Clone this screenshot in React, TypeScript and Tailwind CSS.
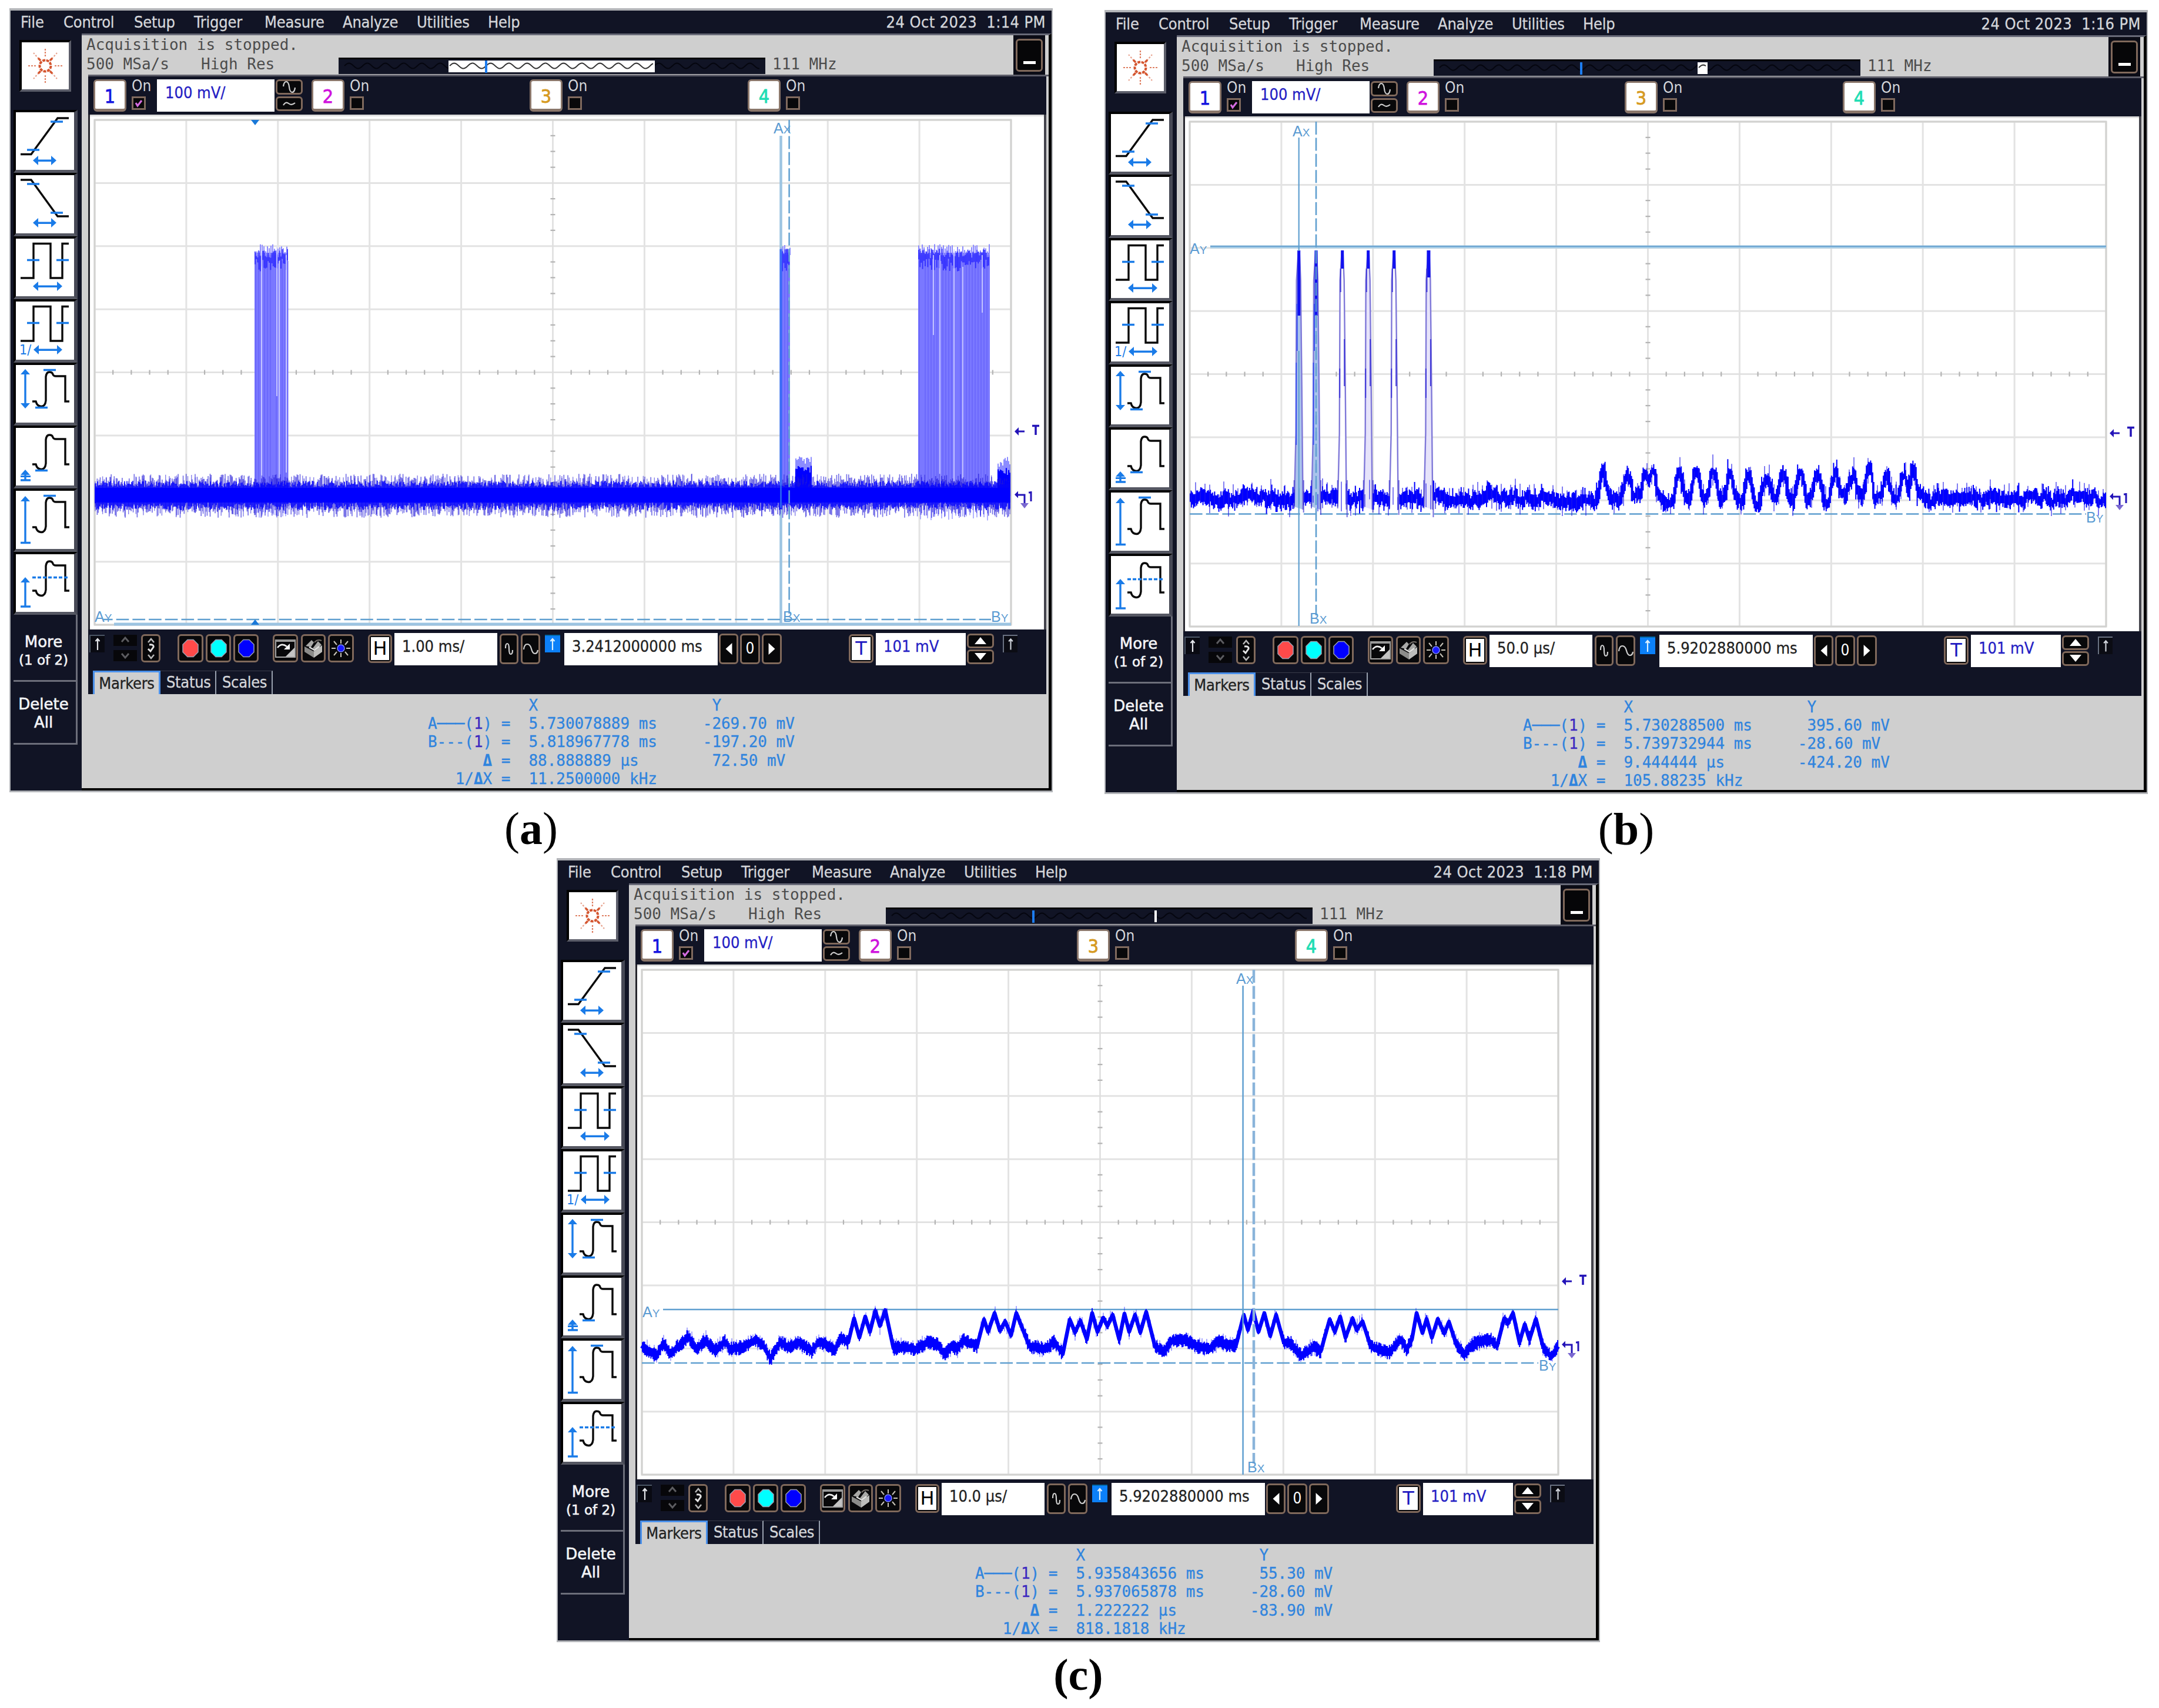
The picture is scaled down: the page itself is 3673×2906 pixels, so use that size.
import type { ReactNode } from "react";

type Kind = "a" | "b" | "c";

interface Capture {
  id: Kind;
  time: string;
  scale: string;
  delay: string;
  windowX: number;
  windowW: number;
  x: string[];
  y: string[];
}

const captures: Record<Kind, Capture> = {
  a: {
    id: "a",
    time: "1:14 PM",
    scale: "1.00 ms/",
    delay: "3.2412000000 ms",
    windowX: 187,
    windowW: 351,
    x: ["5.730078889 ms", "5.818967778 ms", "88.888889 µs", "11.2500000 kHz"],
    y: ["-269.70 mV", "-197.20 mV", " 72.50 mV"],
  },
  b: {
    id: "b",
    time: "1:16 PM",
    scale: "50.0 µs/",
    delay: "5.9202880000 ms",
    windowX: 449,
    windowW: 17,
    x: ["5.730288500 ms", "5.739732944 ms", "9.444444 µs", "105.88235 kHz"],
    y: [" 395.60 mV", "-28.60 mV", "-424.20 mV"],
  },
  c: {
    id: "c",
    time: "1:18 PM",
    scale: "10.0 µs/",
    delay: "5.9202880000 ms",
    windowX: 457,
    windowW: 4,
    x: ["5.935843656 ms", "5.937065878 ms", "1.222222 µs", "818.1818 kHz"],
    y: [" 55.30 mV", "-28.60 mV", "-83.90 mV"],
  },
};

const menus = [
  ["File", "w-[73px]"],
  ["Control", "w-[120px]"],
  ["Setup", "w-[102px]"],
  ["Trigger", "w-[120px]"],
  ["Measure", "w-[133px]"],
  ["Analyze", "w-[126px]"],
  ["Utilities", "w-[121px]"],
  ["Help", "w-[80px]"],
];

const ui = "font-['DejaVu_Sans_Condensed','DejaVu_Sans',sans-serif] [font-stretch:condensed]";
const mono = "font-['DejaVu_Sans_Mono',monospace]";

// small seeded generator so the noise is the same on every render
function makeRandom(seed: number) {
  let s = seed;
  return () => {
    s = (s * 1664525 + 1013904223) % 4294967296;
    return s / 4294967296;
  };
}

// row of vertical strokes, one per sample column
function comb(x0: number, x1: number, step: number, span: (x: number) => [number, number] | null) {
  let d = "";
  for (let x = x0; x <= x1; x += step) {
    const s = span(x);
    if (s) d += `M${x.toFixed(1)} ${s[0].toFixed(1)}V${s[1].toFixed(1)}`;
  }
  return d;
}

/* ---------- plot ---------- */

const L = 145;
const R = 1704;
const T = 190;
const B = 1049;

function Grid() {
  const dx = (R - L) / 10;
  const dy = (B - T) / 8;
  let lines = "";
  for (let i = 0; i <= 10; i++) if (i !== 5) lines += `M${L + dx * i} ${T}V${B}`;
  for (let i = 0; i <= 8; i++) if (i !== 4) lines += `M${L} ${T + dy * i}H${R}`;
  const cx = (L + R) / 2;
  const cy = (T + B) / 2;
  let ticks = "";
  for (let i = 1; i < 50; i++) if (i % 5) ticks += `M${L + (dx * i) / 5} ${cy - 4}v8`;
  for (let i = 1; i < 32; i++) if (i % 4) ticks += `M${cx - 4} ${T + (dy * i) / 4}h8`;
  return (
    <g fill="none">
      <path d={lines} stroke="#e3e3e3" strokeWidth="3" />
      <path d={`M${cx} ${T}V${B}M${L} ${cy}H${R}`} stroke="#dedede" strokeWidth="2.5" />
      <path d={ticks} stroke="#b4b4b4" strokeWidth="2.2" />
      <path d={`M${L} ${B}V${T}H${R}V${B}Z`} stroke="#d2d2d0" strokeWidth="3" />
    </g>
  );
}

function Tag({ x, y, a, b }: { x: number; y: number; a: string; b: string }) {
  return (
    <text x={x} y={y} fontSize="25" fill="#5b9bd2" fontFamily="Liberation Sans, sans-serif">
      {a}
      <tspan fontSize="19">{b}</tspan>
    </text>
  );
}

const cursor = "#5f9fd0";

function BandTrace() {
  const r = makeRandom(11);
  const peak = () => Math.pow(r(), 1.6);
  const fuzz = comb(146, 1703, 1.7, () => [812 - peak() * 20, 846 + peak() * 21]);
  const rare = comb(146, 1703, 6.3, () => [810 - r() * 17, 848 + r() * 17]);
  const mid = comb(146, 1703, 2, () => [815 - r() * 11, 841 + r() * 13]);
  const bursts: [number, number][] = [
    [417, 474],
    [1312, 1328],
    [1546, 1668],
  ];
  return (
    <g fill="none" stroke="#0000ff">
      {bursts.map(([x0, x1]) => (
        <g key={x0}>
          <rect x={x0} y={416} width={x1 - x0} height={403} fill="#7a78ff" stroke="none" />
          <path d={comb(x0 + 1, x1, 3, () => [401 + r() * 14, 420])} stroke="#8c8aff" strokeWidth="2" />
          <path d={comb(x0 + 2, x1, 5, () => (r() > 0.3 ? [430, 815] : null))} stroke="#5a55f8" strokeWidth="1.2" opacity="0.7" />
          <path d={comb(x0 + 1, x1, 2.2, () => [409 + r() * 16, 426 + r() * 22])} stroke="#2824ff" strokeWidth="1.9" opacity="0.85" />
        </g>
      ))}
      <path d="M429 412V800M455 404V660M459 430V800M471 420V790" stroke="#dcdcff" strokeWidth="1.6" />
      <path d="M1572 420V556M1583 420V812M1607 410V812M1622 440V812M1655 420V518" stroke="#d6d6ff" strokeWidth="1.6" />
      <path d={comb(1338, 1365, 2, () => [762 + r() * 18, 830])} strokeWidth="2" opacity="0.45" />
      <path d={comb(1338, 1365, 2, () => [778 + r() * 12, 830])} strokeWidth="2.2" />
      <path d={comb(1682, 1703, 2, () => [762 + r() * 18, 830])} strokeWidth="2" opacity="0.45" />
      <path d={comb(1682, 1703, 2, () => [782 + r() * 12, 830])} strokeWidth="2.2" />
      <path d={fuzz} stroke="#2018d8" strokeWidth="1.7" opacity="0.6" />
      <path d={rare} stroke="#2018d8" strokeWidth="1.4" opacity="0.55" />
      <path d={mid} strokeWidth="1.9" opacity="0.8" />
      <path d="M145 828.5H1703" strokeWidth="25" />
      <path d={comb(420, 472, 5, () => [846, 858 + r() * 10])} strokeWidth="1.2" opacity="0.5" />
      <path d={comb(1550, 1668, 6, () => [846, 860 + r() * 12])} strokeWidth="1.2" opacity="0.5" />
    </g>
  );
}

const spikes = [330.7, 360, 404.7, 448.7, 492.7, 551.4];
const bumps = [848, 890, 921, 932, 978, 1007, 1036, 1065, 1096, 1126, 1155, 1184, 1213, 1242, 1272, 1301, 1331, 1361, 1376];

function SpikeTrace() {
  const r = makeRandom(5);
  const wobble: number[] = [];
  let w = 0;
  for (let i = 0; i < 900; i++) {
    w = w * 0.66 + (r() - 0.5) * 13;
    wobble.push(w);
  }
  const level = (x: number) => {
    let lift = 0;
    for (const c of bumps) {
      const k = Math.exp(-Math.pow(Math.abs(x - c) / 7.5, 3));
      lift = Math.max(lift, k * 42);
    }
    return 832 - lift + wobble[Math.max(0, Math.round((x - 144) / 2))];
  };
  const base = comb(146, 1703, 1.8, (x) => {
    if (spikes.some((c) => Math.abs(x - c) < 8)) return null;
    const a = level(x - 1.5);
    const b = level(x + 1.5);
    const up = r() > 0.85 ? r() * 15 : 0;
    const down = r() > 0.9 ? r() * 12 : 0;
    return [Math.min(a, b) - 4 - r() * 10 - up, Math.max(a, b) + 4 + r() * 9 + down];
  });
  return (
    <g fill="none" stroke="#0000ff">
      {spikes.map((c, i) => (
        <g key={c}>
          <path
            d={`M${c - 8} ${845}L${c - 5} 720L${c - 4} 460L${c - 1} 412H${c + 1}L${c + 3} 460L${c + 5} 640L${c + 7} 850`}
            stroke="#7f78d8"
            strokeWidth="2.4"
            fill={i < 2 ? "#a9c3ec" : i === 5 || i === 3 ? "#e6e3fa" : "#fff"}
          />
          <path d={`M${c} 409V${i < 2 ? 520 : i === 5 ? 455 : 440}`} stroke="#1010f0" strokeWidth={i === 5 ? 6 : 5} />
          {i > 1 && <path d={`M${c - 3} 440V480M${c + 3.5} 560V640M${c - 4.5} 610V660`} stroke="#4038d8" strokeWidth="2" />}
          {i < 2 && <path d={`M${c - 3} 500V580M${c - 4.5} 600V740`} stroke="#3a50f0" strokeWidth="2" />}
          <path d={`M${c - 8} 800V848M${c + 8} 800V${855 + (i % 3) * 4}`} stroke="#3a32d0" strokeWidth="2" opacity="0.7" />
        </g>
      ))}
      <path d={base} strokeWidth="2" />
      <path d={comb(147, 1703, 8, (x) => [level(x) - 26 * r() - 4, level(x) + 22 * r() + 4])} stroke="#2018e8" strokeWidth="1.6" opacity="0.7" />
    </g>
  );
}

const packets: [number, number][] = [
  [144, 830], [170, 847], [181, 825], [194, 843], [224, 814], [239, 835], [253, 820], [270, 838], [286, 822],
  [295, 835], [312, 833], [340, 820], [351, 829], [364, 852], [381, 823], [394, 833], [410, 823], [434, 839],
  [444, 825], [458, 826], [473, 838], [483, 816], [496, 824], [506, 783], [515, 816], [525, 780], [533, 806],
  [542, 770], [550, 796], [559, 769], [573, 834], [596, 833], [611, 836], [628, 825], [648, 826], [659, 844],
  [672, 831], [681, 836], [692, 819], [715, 831], [727, 785], [734, 806], [745, 774], [754, 804], [763, 788],
  [773, 812], [782, 774], [804, 830], [831, 836], [847, 823], [861, 844], [873, 785], [882, 807], [891, 787],
  [902, 819], [911, 774], [920, 806], [930, 782], [937, 796], [946, 777], [957, 819], [966, 775], [974, 806],
  [984, 777], [993, 807], [1003, 772], [1018, 831], [1033, 841], [1047, 821], [1070, 819], [1088, 830],
  [1111, 835], [1128, 821], [1141, 829], [1156, 828], [1169, 777], [1176, 803], [1185, 770], [1194, 806],
  [1204, 774], [1214, 813], [1224, 777], [1237, 824], [1250, 826], [1267, 847], [1288, 833], [1300, 839],
  [1315, 785], [1324, 806], [1333, 780], [1342, 816], [1354, 783], [1361, 803], [1371, 788], [1385, 831],
  [1417, 841], [1436, 819], [1446, 836], [1455, 819], [1463, 774], [1473, 808], [1480, 784], [1489, 816],
  [1499, 784], [1510, 809], [1518, 789], [1531, 829], [1544, 844], [1561, 826], [1587, 819], [1600, 830],
  [1612, 783], [1618, 792], [1627, 774], [1638, 824], [1647, 793], [1655, 819], [1666, 784], [1678, 831],
  [1692, 849], [1704, 831],
];

function PacketTrace() {
  const r = makeRandom(23);
  const at = (x: number) => {
    const i = Math.max(1, packets.findIndex((p) => p[0] >= x));
    const [x0, y0] = packets[i - 1];
    const [x1, y1] = packets[i];
    return y0 + ((y1 - y0) * (x - x0)) / (x1 - x0);
  };
  return (
    <g fill="none" stroke="#0000ff">
      <path d={`M${packets.map((p) => p.join(" ")).join("L")}`} strokeWidth="6.5" strokeLinejoin="round" />
      <path
        d={comb(146, 1703, 1.8, (x) => {
          const quiet = at(x) > 812 ? 1 : 0.65;
          return [at(x) - (6 + r() * 7) * quiet, at(x) + (6 + r() * 7) * quiet];
        })}
        strokeWidth="2"
      />
      <path d={comb(146, 1703, 4, (x) => [at(x) - r() * 18, at(x) + r() * 16])} strokeWidth="1.3" opacity="0.5" />
    </g>
  );
}

const vDash = "22 5.4";
const hDash = "21.6 6.100";

function Plot({ kind }: { kind: Kind }) {
  return (
    <svg className="block h-[876px] w-[1623px]" viewBox="137 181 1623 876">
      <rect x="137" y="181" width="1623" height="3" fill="#dedede" />
      <Grid />
      {kind === "a" && (
        <>
          <path d="M1312.5 217V1048" stroke="#9cc4e2" strokeWidth="4.5" />
          <BandTrace />
          <path d="M1312.5 410V812" stroke="#3a6cf8" strokeWidth="4" />
          <path d="M1312.5 812V850" stroke="#2a6cf0" strokeWidth="2.5" />
          <path d="M1326.6 410V812" stroke="#fff" strokeWidth="2.5" strokeDasharray="5.4 22" />
          <path d="M1326.6 190V1030" stroke={cursor} strokeWidth="2.5" strokeDasharray={vDash} />
          <path d="M160 1040H1670" stroke={cursor} strokeWidth="2.5" strokeDasharray={hDash} strokeDashoffset="6" />
          <path d="M178 1048H1704" stroke="#9cc4e2" strokeWidth="5" />
          <path d="M411 190h14l-7 9zM411 1049h14l-7 -9z" fill="#1978d8" />
          <Tag x={1300} y={213} a="A" b="X" />
          <Tag x={1316} y={1044} a="B" b="X" />
          <Tag x={145} y={1044} a="A" b="Y" />
          <Tag x={1670} y={1044} a="B" b="Y" />
        </>
      )}
      {kind === "b" && (
        <>
          <path d="M145 857.5H1670" stroke={cursor} strokeWidth="2.5" strokeDasharray={hDash} />
          <SpikeTrace />
          <path d="M180 403H1704" stroke="#a3cbe6" strokeWidth="5" />
          <path d="M180 402H1704" stroke="#6ba3d0" strokeWidth="2" />
          <path d="M330.7 217V410M330.7 580V1048" stroke={cursor} strokeWidth="2.2" />
          <path d="M360 520V810" stroke="#fff" strokeWidth="2.5" strokeDasharray="5.4 22" />
          <path d="M360 190V1030" stroke={cursor} strokeWidth="2.6" strokeDasharray={vDash} />
          <Tag x={320} y={215} a="A" b="X" />
          <Tag x={349} y={1044} a="B" b="X" />
          <Tag x={145} y={415} a="A" b="Y" />
          <Tag x={1670} y={872} a="B" b="Y" />
        </>
      )}
      {kind === "c" && (
        <>
          <path d="M181 768H1704" stroke={cursor} strokeWidth="2.5" />
          <path d="M145 859H1670" stroke={cursor} strokeWidth="2.5" strokeDasharray={hDash} />
          <PacketTrace />
          <path d="M1167.6 217V1049" stroke={cursor} strokeWidth="2.5" />
          <path d="M1186 190V1030" stroke="#8ab4da" strokeWidth="4.5" strokeDasharray={vDash} />
          <Tag x={1156} y={214} a="A" b="X" />
          <Tag x={1175} y={1045} a="B" b="X" />
          <Tag x={146} y={781} a="A" b="Y" />
          <Tag x={1671} y={872} a="B" b="Y" />
        </>
      )}
      <g stroke="#2414b8" strokeWidth="3" fill="none">
        <path d="M1712 720h15" />
        <path d="M1740 710.500h12M1746 710v16" strokeWidth="3.500" />
        <path d="M1712 828h8M1719 828h8v16M1738 822v17M1734 824h4" />
        <path d="M1710 720l7 -7v14zM1710 827.500l6 -6v12z" fill="#2414b8" stroke="none" />
      </g>
      <path d="M1720 842h14l-7 9z" fill="#7a68d0" />
    </svg>
  );
}

/* ---------- sidebar ---------- */

const BLUE = "#1a7be8";

function HArrow({ x0, x1, y }: { x0: number; x1: number; y: number }) {
  return (
    <g fill={BLUE} stroke="none">
      <rect x={x0 + 5} y={y - 1.5} width={x1 - x0 - 10} height="3.5" />
      <path d={`M${x0 - 1} ${y}l9 -8v16zM${x1 + 1} ${y}l-9 -8v16z`} />
    </g>
  );
}

const overshoot = "M28 62h6q2 8 9 8.500q7 0 8 -10V20q1 -8 6 -8q5 0 6 4q1 3 5 3h16v43h7";
const pulse = "M8 67H30V8.500H59V67H79V8.500H90";

const measureIcons: ReactNode[] = [
  <>
    <path d="M8 71.500H26L71 10H90" />
    <path d="M19 64h21M59 16h21" stroke={BLUE} />
    <HArrow x0={30} x1={68} y={82} />
  </>,
  <>
    <path d="M8 8H26L71 70H90" />
    <path d="M19 15h21M59 64h21" stroke={BLUE} />
    <HArrow x0={30} x1={68} y={81} />
  </>,
  <>
    <path d={pulse} />
    <path d="M19 36.500h21M69 36.500h21" stroke={BLUE} />
    <HArrow x0={30} x1={78} y={81} />
  </>,
  <>
    <path d={pulse} />
    <path d="M19 36.500h21M69 36.500h21" stroke={BLUE} />
    <text x="6" y="90" fontSize="23" fill={BLUE} stroke="none" fontFamily="DejaVu Sans Condensed, DejaVu Sans, sans-serif">
      1/
    </text>
    <HArrow x0={31} x1={78} y={82} />
  </>,
  <>
    <path d={overshoot} />
    <path d="M47 8.500h21M33 72.500h21M16 14V68" stroke={BLUE} />
    <path d="M16 7l8 9h-16zM16 74l8 -9h-16z" fill={BLUE} stroke="none" />
  </>,
  <>
    <path d={overshoot} />
    <path d="M33 72.500h21M8 89h17M16 76v13" stroke={BLUE} />
    <path d="M16 71l8 9h-16zM8 81h17v3h-17z" fill={BLUE} stroke="none" />
  </>,
  <>
    <path d={overshoot} />
    <path d="M47 8.500h21M8 88.500h17M16 16V88" stroke={BLUE} />
    <path d="M16 9l8 9h-16z" fill={BLUE} stroke="none" />
  </>,
  <>
    <path d={overshoot} />
    <path d="M28 39.500h60" stroke={BLUE} strokeDasharray="6 3" />
    <path d="M8 89h17M16 46V88" stroke={BLUE} />
    <path d="M16 39l8 9h-16z" fill={BLUE} stroke="none" />
  </>,
];

function Sidebar() {
  return (
    <div className="flex w-[121px] shrink-0 flex-col font-['DejaVu_Sans',sans-serif] text-[26px] leading-[31px] text-gray-100">
      <div className="mt-[11px] ml-[15px] h-[88px] w-[88px] border-4 border-t-black border-r-[#5c5e6a] border-b-[#5c5e6a] border-l-black bg-white">
        <svg viewBox="0 0 80 80" className="block h-full w-full" fill="none" stroke="#d4552f">
          <circle cx="40" cy="40" r="9.500" strokeWidth="4" strokeDasharray="5 1.600" />
          <path d="M40 24V10M40 56V70M24 40H10M56 40H70" strokeWidth="2.200" strokeDasharray="3 2" opacity="0.75" />
          <path d="M29 28L20 18M51 28L60 18M29 52L20 62M51 52L60 62" strokeWidth="2.200" strokeDasharray="3 2.500" opacity="0.55" />
          <path d="M28 27l4 4M52 27l-4 4M28 53l4 -4M52 53l-4 -4" strokeWidth="3.500" />
        </svg>
      </div>
      <div className="mt-[31px] ml-[5px] flex w-[109px] flex-col">
        {measureIcons.map((icon, i) => (
          <div
            key={i}
            className="h-[107.4px] border-t-[4px] border-r-[6px] border-b-[5px] border-l-[4px] border-t-black border-r-[#474956] border-b-[#565863] border-l-black bg-white"
          >
            <svg viewBox="0 0 99 98" className="block h-[98px] w-[99px]" fill="none" stroke="#0a0a0a" strokeWidth="3.400">
              {icon}
            </svg>
          </div>
        ))}
        <div className="h-[114px] border-r-[3px] border-b-[3px] border-[#6c6e7a] pt-[31px] pr-[4px] text-center [-webkit-text-stroke:0.6px]">
          More
          <div className="text-[23px]">(1 of 2)</div>
        </div>
        <div className="h-[107px] border-r-[3px] border-b-[3px] border-[#6c6e7a] pt-[23px] pr-[4px] text-center [-webkit-text-stroke:0.6px]">
          Delete
          <br />
          All
        </div>
      </div>
    </div>
  );
}

/* ---------- controls ---------- */

function Btn({ className, children }: { className: string; children?: ReactNode }) {
  return (
    <div className={`flex shrink-0 items-center justify-center rounded-md border-[3px] border-[#80695b] bg-[#08080a] text-white ${className}`}>
      {children}
    </div>
  );
}

function Wave({ size }: { size: "tall" | "flat" | "thin" | "wide" }) {
  const paths = {
    tall: "M9 12q1 -8 5 -8t5 9t5 9t5 -8",
    flat: "M9 15q4 -7 9 -3t11 -1",
    thin: "M13 12q0 -8 3 -8t3 9t3 9t3 -7",
    wide: "M7 14q1 -9 6 -9t7 8t6 8t5 -6",
  };
  return (
    <svg viewBox="0 0 38 26" className="h-[26px] w-[38px] shrink-0" fill="none" stroke="#d0d0d0" strokeWidth="2.2">
      <path d={paths[size]} />
    </svg>
  );
}

function UpArrow({ className }: { className: string }) {
  return (
    <div className={`flex h-[30px] shrink-0 items-center justify-center ${className}`}>
      <svg viewBox="0 0 24 28" className="h-[28px] w-[24px]" fill="none" stroke="currentColor" strokeWidth="2.2">
        <path d="M12 5v19M8.500 9l3.500 -4l3.500 4" />
      </svg>
    </div>
  );
}

const channels = [
  ["1", "text-[#1414e0]"],
  ["2", "text-[#cf12dd]"],
  ["3", "text-[#d69a22]"],
  ["4", "text-[#20ddb4]"],
];

function ChannelBar() {
  return (
    <div className="mr-[4px] ml-[11px] flex h-[65px] items-start bg-[#111425] pt-[5px] pl-[9px]">
      {channels.map(([n, color]) => (
        <div key={n} className="flex w-[371px] shrink-0 items-start">
          <div
            className={`flex h-[55px] w-[56px] items-center justify-center rounded-md border-[3px] border-b-[5px] border-[#8a766a] bg-white pt-[4px] text-[32px] leading-none [-webkit-text-stroke:0.8px] ${ui} ${color}`}
          >
            {n}
          </div>
          <div className={`ml-[9px] w-[40px] text-[26px] leading-[24px] text-[#d4d6da] ${ui}`}>
            <div className="-mt-px">On</div>
            <div className="mt-[6px] flex h-[23px] w-[24px] items-center justify-center border-[3px] border-[#806a5e] bg-[#08080a]">
              {n === "1" && (
                <svg viewBox="0 0 16 16" className="h-[16px] w-[16px]" fill="none" stroke="#d46be0" strokeWidth="3.2">
                  <path d="M3 7l3 5l7 -9" />
                </svg>
              )}
            </div>
          </div>
          {n === "1" && (
            <>
              <div
                className={`ml-[3px] h-[55px] w-[200px] bg-white pt-[3px] pl-[14px] text-[27px] leading-[40px] text-[#2420c4] [-webkit-text-stroke:0.3px] ${ui}`}
              >
                100 mV/
              </div>
              <div className="ml-[2px] flex flex-col gap-[3px]">
                <Btn className="h-[26px] w-[46px]">
                  <Wave size="tall" />
                </Btn>
                <Btn className="h-[25px] w-[46px]">
                  <Wave size="flat" />
                </Btn>
              </div>
            </>
          )}
        </div>
      ))}
    </div>
  );
}

function sine(width: number, phase: number) {
  let d = "";
  for (let x = 0; x <= width; x += 2) {
    d += `${x ? "L" : "M"}${x} ${(14 - 4.5 * Math.sin(((x + phase) / 31) * Math.PI * 2)).toFixed(1)}`;
  }
  return d;
}

function Overview({ start, width }: { start: number; width: number }) {
  return (
    <svg viewBox="0 0 726 28" className="block h-[28px] w-[726px]" fill="none">
      <rect width="726" height="28" fill="#111425" />
      <rect width="726" height="3" fill="#05050a" />
      <path d={sine(706, 0)} transform="translate(10 0)" stroke="#05060f" strokeWidth="2" />
      <rect x={start} y="5" width={width} height="20" fill="#fff" />
      {width > 10 && <path d={sine(width - 4, 0)} transform={`translate(${start + 2} 0)`} stroke="#333" strokeWidth="2" />}
      <rect x="249" y="5" width="4" height="21" fill="#1d7df0" />
    </svg>
  );
}

function StatusStrip({ shot }: { shot: Capture }) {
  return (
    <div className="flex h-[67px] shrink-0 bg-[#cfcfcf]">
      <div className={`w-[437px] shrink-0 pl-[8px] text-[26px] leading-[32px] text-[#4c4c4c] ${mono}`}>
        <div>Acquisition is stopped.</div>
        <div className="mt-px flex">
          <div className="w-[195px]">500 MSa/s</div>
          <div>High Res</div>
        </div>
      </div>
      <div className="pt-[38px]">
        <Overview start={shot.windowX} width={shot.windowW} />
      </div>
      <div className={`ml-[12px] pt-[33px] text-[26px] leading-[32px] text-[#4c4c4c] ${mono}`}>111 MHz</div>
      <div className="mr-[6px] ml-auto flex w-[54px] items-center justify-center bg-[#0b0c16]">
        <div className="flex h-[56px] w-[46px] flex-col items-center justify-end rounded-md border-[3px] border-[#80695b] bg-[#060608] pb-[10px]">
          <div className="h-[5px] w-[21px] bg-white" />
        </div>
      </div>
    </div>
  );
}

function Dot({ color }: { color: string }) {
  return (
    <svg viewBox="0 0 32 32" className="h-[32px] w-[32px] shrink-0">
      <path d="M11 1.500h10l8 8v13l-8 8h-10l-8 -8v-13z" fill={color} stroke="#9a9fb0" strokeWidth="1.500" />
    </svg>
  );
}

function Field({ className, children }: { className: string; children: ReactNode }) {
  return (
    <div
      className={`-mt-px h-[55px] shrink-0 bg-white pt-[3px] pl-[13px] text-[27px] leading-[40px] whitespace-nowrap [-webkit-text-stroke:0.3px] ${ui} ${className}`}
    >
      {children}
    </div>
  );
}

function Letter({ className, children }: { className: string; children: ReactNode }) {
  return (
    <Btn className={`mt-px h-[49px] p-[2px] ${className}`}>
      <div className="flex h-full w-full items-center justify-center bg-white font-['DejaVu_Sans',sans-serif] text-[32px] leading-none">
        {children}
      </div>
    </Btn>
  );
}

function Toolbar({ shot }: { shot: Capture }) {
  return (
    <div className="mr-[4px] ml-[11px] flex h-[70px] shrink-0 items-start bg-[#111425] pt-[7px]">
      <UpArrow className="mt-[2px] ml-[2px] w-[26px] border-t-2 border-l-2 border-gray-600 bg-[#090a12] text-gray-200" />
      <div className="mt-[2px] ml-[15px] flex flex-col gap-[7px]">
        {["M14 12l6 -7l6 7", "M14 6l6 7l6 -7"].map((d) => (
          <svg key={d} viewBox="0 0 40 19" className="h-[19px] w-[40px] bg-[#07070a]" fill="none" stroke="#5c5c60" strokeWidth="3">
            <path d={d} />
          </svg>
        ))}
      </div>
      <Btn className="mt-px ml-[7px] h-[48px] w-[33px]">
        <svg viewBox="0 0 20 40" className="h-[40px] w-[20px]" fill="none" stroke="#e6e6e6" strokeWidth="2.6">
          <path d="M5 10l5 -6l5 6M5 31l5 6l5 -6" stroke="#b8b8b8" />
          <path d="M7 14q8 -1 7 4l-5 7l-4 -4" strokeWidth="3" />
        </svg>
      </Btn>
      <Btn className="mt-px ml-[29px] h-[48px] w-[44px]">
        <Dot color="#ff4a4a" />
      </Btn>
      <Btn className="mt-px ml-[4px] h-[48px] w-[43px]">
        <Dot color="#00ffff" />
      </Btn>
      <Btn className="mt-px ml-[4px] h-[48px] w-[43px]">
        <Dot color="#0000ff" />
      </Btn>
      <Btn className="mt-px ml-[24px] h-[48px] w-[43px]">
        <svg viewBox="0 0 37 42" className="h-[42px] w-[37px]" fill="none">
          <path d="M2 36V7h33v29z" stroke="#a8a8a8" strokeWidth="2" />
          <path d="M2 8h33" stroke="#9a9a9a" strokeWidth="4" />
          <path d="M34 20v15H19z" fill="#c4c4c4" />
          <path d="M5 20q7 -9 16 -2" stroke="#f0f0f0" strokeWidth="2.6" />
          <path d="M26 13v10h-10z" fill="#fff" />
        </svg>
      </Btn>
      <Btn className="mt-px ml-[5px] h-[48px] w-[42px]">
        <svg viewBox="0 0 36 42" className="h-[42px] w-[36px]">
          <path d="M3 18l15 8l15 -10v11L19 37L3 27z" fill="#8c8c8a" />
          <path d="M19 27l14 -11v11L19 37z" fill="#bdbdbb" />
          <path d="M5 17L15 7l4 4l-5 8zM17 21l9 -12l6 6l-8 9z" fill="#a9a9a7" />
          <path d="M11 19l9 5l8 -6" stroke="#e2e2e0" strokeWidth="2.5" fill="none" />
          <path d="M20 11q5 -6 12 -3" stroke="#77706a" strokeWidth="2" fill="none" />
        </svg>
      </Btn>
      <Btn className="mt-px ml-[4px] h-[48px] w-[44px]">
        <svg viewBox="0 0 38 42" className="h-[42px] w-[38px]" stroke="#c8c4b8" strokeWidth="2">
          <path d="M19 6v7M19 29v7M3 21h7M28 21h7M7 9l5 6M31 9l-5 6M7 33l5 -6M31 33l-5 -6" />
          <circle cx="19" cy="21" r="6" fill="#1a1aff" stroke="#7f8cff" strokeWidth="1.500" />
        </svg>
      </Btn>
      <Letter className="ml-[24px] w-[41px] !text-black">H</Letter>
      <Field className="ml-[4px] w-[175px] text-[#222]">{shot.scale}</Field>
      <Btn className="ml-[4px] h-[52px] w-[32px]">
        <Wave size="thin" />
      </Btn>
      <Btn className="ml-[4px] h-[52px] w-[33px] overflow-hidden">
        <Wave size="wide" />
      </Btn>
      <UpArrow className="mt-[2px] ml-[8px] w-[26px] border-t-2 border-sky-700 bg-[#0c80f8] text-sky-100" />
      <Field className="ml-[7px] w-[261px] text-[#222]">{shot.delay}</Field>
      <Btn className="ml-[2px] h-[52px] w-[33px]">
        <svg viewBox="0 0 12 22" className="h-[20px] w-[12px]" fill="#fff">
          <path d="M12 0v22L0 11z" />
        </svg>
      </Btn>
      <Btn className={`ml-[3px] h-[52px] w-[34px] text-[26px] ${ui}`}>0</Btn>
      <Btn className="ml-[3px] h-[52px] w-[34px]">
        <svg viewBox="0 0 12 22" className="h-[20px] w-[12px]" fill="#fff">
          <path d="M0 0v22L12 11z" />
        </svg>
      </Btn>
      <Letter className="ml-[114px] w-[42px] !text-[#2018c0]">T</Letter>
      <Field className="ml-[4px] w-[153px] text-[#2420c4]">101 mV</Field>
      <div className="ml-[2px] flex flex-col gap-[2px]">
        <Btn className="h-[25px] w-[46px]">
          <svg viewBox="0 0 20 12" className="h-[12px] w-[20px]" fill="#fff">
            <path d="M0 12h20L10 0z" />
          </svg>
        </Btn>
        <Btn className="h-[25px] w-[46px]">
          <svg viewBox="0 0 20 12" className="h-[12px] w-[20px]" fill="#fff">
            <path d="M0 0h20L10 12z" />
          </svg>
        </Btn>
      </div>
      <UpArrow className="mt-[2px] ml-[15px] w-[25px] border-t-2 border-l-2 border-gray-500 bg-[#0b0c14] text-gray-300" />
    </div>
  );
}

function Tabs() {
  return (
    <div
      className={`mr-[4px] ml-[11px] flex h-[40px] shrink-0 bg-[#111425] pl-[8px] text-[27px] leading-[37px] tracking-[-0.3px] text-[#d4d6da] [-webkit-text-stroke:0.3px] ${ui}`}
    >
      <div className="w-[115px] border-x-[3px] border-t-[3px] border-[#4a90ea] bg-[#cfcfcf] text-center text-[#222]">Markers</div>
      <div className="w-[95px] border-t border-r-2 border-t-[#3a3c4a] border-r-gray-400 pl-[10px]">Status</div>
      <div className="w-[96px] border-t border-r-2 border-t-[#3a3c4a] border-r-gray-400 pl-[10px]">Scales</div>
    </div>
  );
}

function Readout({ shot }: { shot: Capture }) {
  const one = <span className="text-[#3c28c0]">1</span>;
  const row = (i: number) => `  ${shot.x[i].padEnd(19)}${shot.y[i] ?? ""}\n`;
  return (
    <div
      className={`pt-[4px] pl-[589px] text-[26px] leading-[31.2px] tracking-[-0.06px] whitespace-pre text-[#2f84de] [-webkit-text-stroke:0.3px] ${mono}`}
    >
      {`${"".padEnd(11)}X${"".padEnd(19)}Y\n`}
      A───({one}) ={row(0)}
      B---({one}) ={row(1)}
      {"      "}
      <b>Δ</b> ={row(2)}
      {"   1/"}
      <b>Δ</b>X ={row(3)}
    </div>
  );
}

function Scope({ shot }: { shot: Capture }) {
  return (
    <div className="flex h-[1334px] w-[1775px] flex-col border-x-2 border-t-[4px] border-b-[3px] border-[#b2b4b8] bg-[#111425]">
      <div
        className={`flex h-[39px] shrink-0 items-center pl-[17px] text-[27px] leading-none tracking-[-0.2px] text-[#d4d6da] [-webkit-text-stroke:0.3px] ${ui}`}
      >
        {menus.map(([label, width]) => (
          <span key={label} className={width}>
            {label}
          </span>
        ))}
        <span className="mr-[10px] ml-auto tracking-[0.4px] whitespace-pre">{`24 Oct 2023  ${shot.time}`}</span>
      </div>
      <div className="flex h-[1288px]">
        <Sidebar />
        <div className="flex w-[1650px] shrink-0 flex-col border-t-[3px] border-r-[5px] border-b-[4px] border-t-[#686a78] border-r-black border-b-black bg-[#cfcfcf]">
          <StatusStrip shot={shot} />
          <div className="ml-[11px] h-[3px] shrink-0 bg-[#5c5c68]" />
          <ChannelBar />
          <div className="mr-[4px] ml-[11px] shrink-0 border-r-[4px] border-l-[3px] border-r-[#44444c] border-l-[#26262e] bg-white">
            <Plot kind={shot.id} />
          </div>
          <Toolbar shot={shot} />
          <Tabs />
          <Readout shot={shot} />
        </div>
      </div>
    </div>
  );
}

export default function App() {
  return (
    <div className="h-[2906px] w-[3673px] overflow-hidden bg-white font-['Liberation_Serif',serif] text-black">
      <div className="flex h-[1460px] items-start">
        <div className="mt-[14px] ml-[16px]">
          <Scope shot={captures.a} />
          <p className="mt-[22px] text-center text-[78px] leading-[80px]">
            (<b>a</b>)
          </p>
        </div>
        <div className="mt-[17px] ml-[88px]">
          <Scope shot={captures.b} />
          <p className="mt-[20px] text-center text-[78px] leading-[80px]">
            (<b>b</b>)
          </p>
        </div>
      </div>
      <div className="ml-[947px] w-[1775px]">
        <Scope shot={captures.c} />
        <p className="mt-[15px] text-center text-[76px] leading-[80px] font-bold">(c)</p>
      </div>
    </div>
  );
}
